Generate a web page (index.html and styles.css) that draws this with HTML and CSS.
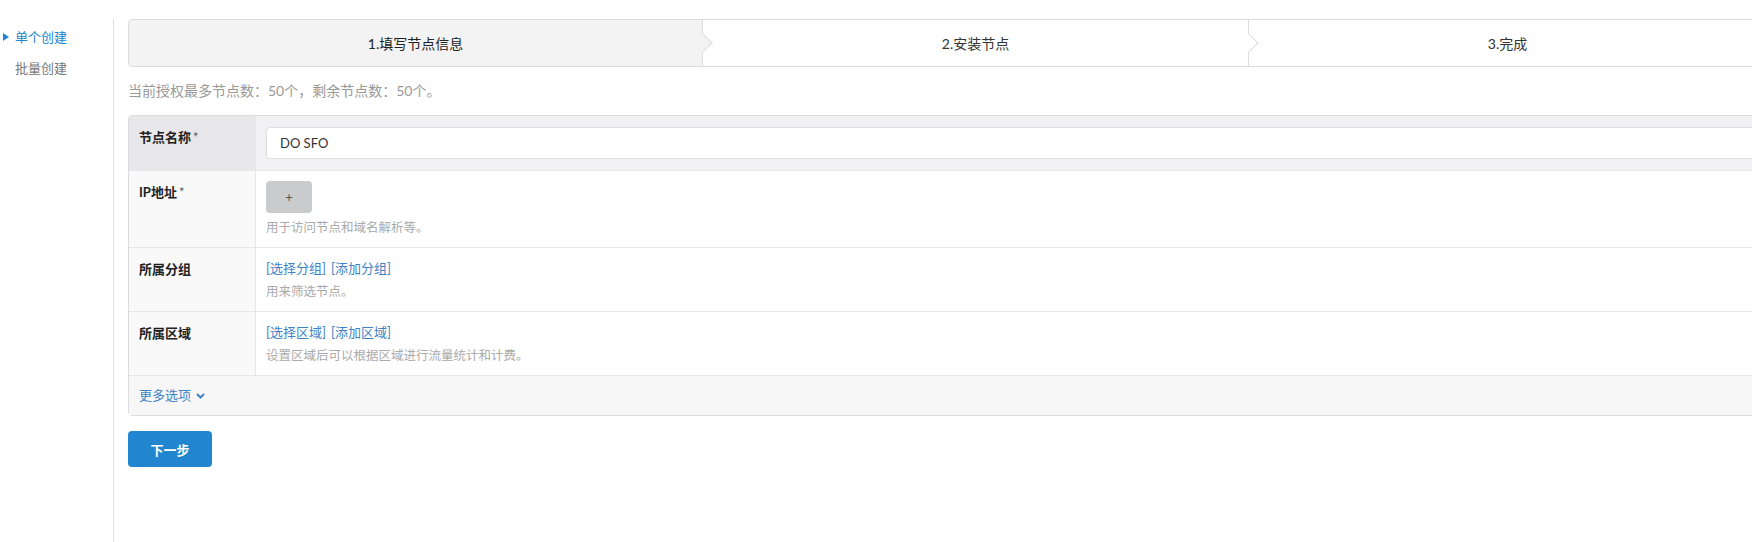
FILE: index.html
```html
<!DOCTYPE html>
<html lang="zh-CN">

<head>
    <meta charset="UTF-8" />
    <title>创建节点</title>
    <link rel="stylesheet" href="styles.css">
</head>

<body>
    <div class="page">
        <div class="side-menu">
            <a class="menu-item active">单个创建</a>
            <a class="menu-item">批量创建</a>
        </div>

        <div class="main">
            <div class="steps">
                <div class="step active">1.填写节点信息</div>
                <div class="step">2.安装节点</div>
                <div class="step">3.完成</div>
            </div>

            <p class="info">当前授权最多节点数：50个，剩余节点数：50个。</p>

            <table class="form-table">
                <colgroup>
                    <col class="col-label">
                    <col>
                </colgroup>
                <tbody>
                    <tr class="hover">
                        <td class="title">节点名称<span class="req">*</span></td>
                        <td class="value-input"><input type="text" value="DO SFO" /></td>
                    </tr>
                    <tr>
                        <td class="title">IP地址<span class="req">*</span></td>
                        <td>
                            <button class="btn-add">+</button>
                            <p class="comment comment-ip">用于访问节点和域名解析等。</p>
                        </td>
                    </tr>
                    <tr>
                        <td class="title">所属分组</td>
                        <td>
                            <div class="links"><a>[选择分组]</a><a>[添加分组]</a></div>
                            <p class="comment">用来筛选节点。</p>
                        </td>
                    </tr>
                    <tr>
                        <td class="title">所属区域</td>
                        <td>
                            <div class="links"><a>[选择区域]</a><a>[添加区域]</a></div>
                            <p class="comment">设置区域后可以根据区域进行流量统计和计费。</p>
                        </td>
                    </tr>
                    <tr class="more-row">
                        <td colspan="2">
                            <a class="more-link">更多选项
                                <svg width="9" height="6" viewBox="0 0 9 6">
                                    <polyline points="1,1 4.5,4.5 8,1" fill="none" stroke="#4183c4" stroke-width="2" />
                                </svg>
                            </a>
                        </td>
                    </tr>
                </tbody>
            </table>

            <button class="btn-next">下一步</button>
        </div>
    </div>
</body>

</html>
```

FILE: styles.css
```css
html,
body {
    margin: 0;
    overflow: hidden;
    background: #fff;
}

body {
    font-family: Lato, "Noto Sans CJK SC", sans-serif;
    font-size: 14px;
    color: #333;
}

.page {
    display: flex;
    min-height: 542px;
    padding-top: 19px;
    box-sizing: border-box;
}

/* left menu */
.side-menu {
    flex: 0 0 113px;
    border-right: 1px solid #e0e0e0;
    padding-top: 8px;
    display: flex;
    flex-direction: column;
    gap: 11px;
}

.menu-item {
    position: relative;
    padding-left: 15px;
    font-size: 13px;
    line-height: 20px;
    color: #777;
}

.menu-item.active {
    color: #2185d0;
}

.menu-item.active::before {
    content: "";
    position: absolute;
    left: 3px;
    top: 6px;
    border-left: 6px solid #2185d0;
    border-top: 4px solid transparent;
    border-bottom: 4px solid transparent;
}

.main {
    flex: 0 0 1639px;
    padding-left: 14px;
}

/* steps */
.steps {
    display: flex;
    border: 1px solid #dcdcde;
    border-radius: 4px;
    height: 46px;
}

.step {
    flex: 1 1 auto;
    position: relative;
    display: flex;
    align-items: center;
    justify-content: center;
    padding: 0 28px;
    background: #fff;
    border-right: 1px solid #dcdcde;
    font-size: 14px;
    color: #333;
    white-space: nowrap;
}

.step.active {
    background: #f3f3f4;
    border-radius: 4px 0 0 4px;
    color: #222;
}

.step::after {
    content: "";
    position: absolute;
    top: 50%;
    right: 0;
    width: 14px;
    height: 14px;
    background: inherit;
    border: solid #dcdcde;
    border-width: 0 1px 1px 0;
    transform: translate(50%, -50%) rotate(-45deg);
    z-index: 2;
}

.step:last-child {
    border-right: none;
}

.step:last-child::after {
    display: none;
}

.info {
    margin: 14px 0;
    font-size: 14px;
    line-height: 20px;
    color: #999;
}

/* form table */
.form-table {
    width: 100%;
    table-layout: fixed;
    border-collapse: separate;
    border-spacing: 0;
    border: 1px solid #dcdcde;
    border-radius: 4px;
}

.col-label {
    width: 127px;
}

.form-table td {
    vertical-align: top;
    padding: 10px;
    border-top: 1px solid #e6e6e8;
    font-size: 13px;
}

.form-table tr:first-child td {
    border-top: none;
}

.form-table td.title {
    padding: 11px 10px;
    line-height: 20px;
    font-weight: bold;
    color: #222;
    background: #f9f9fa;
    border-right: 1px solid #e6e6e8;
}

.req {
    font-weight: normal;
    margin-left: 2px;
    color: #555;
}

.form-table tr.hover td {
    background: #f1f1f3;
}

.form-table tr.hover td.title {
    background: #e8e8ea;
}

.form-table td.value-input {
    padding: 11px 10px;
}

.form-table input {
    display: block;
    width: 100%;
    height: 32px;
    box-sizing: border-box;
    padding: 0 13px;
    border: 1px solid #dedee0;
    border-radius: 4px;
    background: #fff;
    font-family: Lato, "Noto Sans CJK SC", sans-serif;
    font-size: 13px;
    color: #333;
    outline: none;
}

.btn-add {
    display: block;
    width: 46px;
    height: 32px;
    border: none;
    border-radius: 4px;
    background: #cacbcd;
    color: #555;
    font-size: 13px;
    font-family: Lato, sans-serif;
}

.comment {
    margin: 5px 0 0;
    font-size: 12.5px;
    line-height: 18px;
    color: #aaa;
}

.comment-ip {
    margin-top: 6px;
}

.links {
    line-height: 20px;
}

.links a,
.more-link {
    color: #4183c4;
    margin-right: 5px;
}

.form-table tr.more-row td {
    background: #f7f7f8;
    padding: 9px 10px 10px;
    line-height: 20px;
}

.more-link svg {
    margin-left: 2px;
    vertical-align: 1px;
}

.btn-next {
    margin-top: 15px;
    width: 84px;
    height: 36px;
    border: none;
    border-radius: 4px;
    background: #2185d0;
    color: #fff;
    font-family: Lato, "Noto Sans CJK SC", sans-serif;
    font-size: 13px;
    font-weight: bold;
}
```
